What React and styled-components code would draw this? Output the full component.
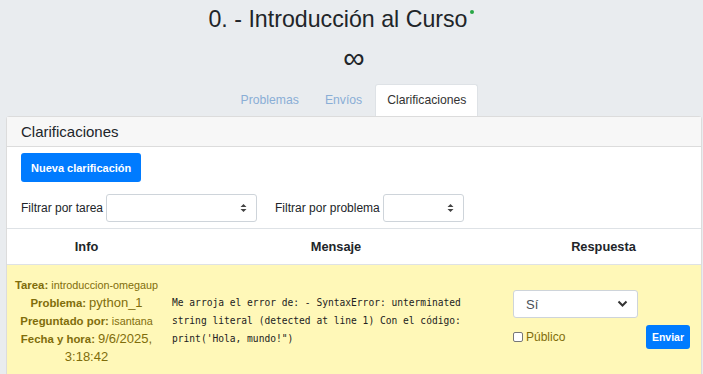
import styled, { createGlobalStyle } from 'styled-components';

const GlobalStyle = createGlobalStyle`
  body {
    margin: 0;
    background: #e9ecef;
    font-family: "Liberation Sans", Arial, sans-serif;
    color: #212529;
  }
`;

const Page = styled.div`
  padding: 0 1px 0 6px;
`;

const Title = styled.h1`
  margin: 0;
  padding: 4px 26px 0 0;
  text-align: center;
  font-size: 23.2px;
  font-weight: 400;
  line-height: 30px;
  height: 36px;
`;

const Dot = styled.span`
  display: inline-block;
  width: 4px;
  height: 4px;
  border-radius: 50%;
  background: #28a745;
  vertical-align: top;
  margin-top: 6px;
  margin-left: 2px;
`;

const Infinity = styled.div`
  text-align: center;
  font-size: 30px;
  line-height: 36px;
  height: 44px;
`;

const Tabs = styled.nav`
  display: flex;
  justify-content: center;
  padding-right: 2px;
  height: 32px;
`;

const Tab = styled.a`
  padding: 0 ${(p) => (p.$active ? '11px' : '12px')};
  font-size: 12.2px;
  line-height: 31px;
  color: ${(p) => (p.$active ? '#333' : '#8aaed6')};
  background: ${(p) => (p.$active ? '#fff' : 'transparent')};
  border: 1px solid ${(p) => (p.$active ? '#dee2e6' : 'transparent')};
  border-bottom: none;
  border-radius: 3px 3px 0 0;
`;

const Card = styled.section`
  background: #fff;
  border: 1px solid #dcdcdc;
  border-radius: 3px 3px 0 0;
`;

const CardHeader = styled.header`
  background: #f7f7f7;
  border-bottom: 1px solid #dcdcdc;
  padding: 0 14px;
  font-size: 15px;
  line-height: 29px;
`;

const Body = styled.div`
  padding: 6px 14px 0;
`;

const Button = styled.button`
  font-family: inherit;
  font-size: ${(p) => p.$fs || '11px'};
  font-weight: 700;
  color: #fff;
  background: #007bff;
  border: none;
  border-radius: 3px;
  padding: 0 ${(p) => p.$px || '10px'};
  height: ${(p) => p.$h || '29px'};
  cursor: pointer;
`;

const Filters = styled.div`
  display: flex;
  align-items: center;
  margin: 12px 0 6px;
  font-size: 12px;
  gap: 18px;
`;

const Filter = styled.label`
  display: flex;
  align-items: center;
  gap: 3px;
`;

const FakeSelect = styled.div`
  width: ${(p) => p.$w};
  height: 28px;
  border: 1px solid #ced4da;
  border-radius: 3px;
  background: #fff;
  box-sizing: border-box;
  display: flex;
  align-items: center;
  justify-content: ${(p) => (p.$text ? 'space-between' : 'flex-end')};
  padding: 0 9px 0 12px;
  font-size: 13px;
  color: #495057;
`;

const Table = styled.div`
  border-top: 1px solid #dee2e6;
`;

const Row = styled.div`
  display: grid;
  grid-template-columns: 159px 340px 1fr;
  background: ${(p) => (p.$warn ? '#fff8b8' : '#fff')};
  border-bottom: ${(p) => (p.$warn ? 'none' : '1px solid #dee2e6')};
`;

const Th = styled.div`
  font-size: 12.8px;
  font-weight: 700;
  text-align: center;
  line-height: 35px;
`;

const InfoCell = styled.div`
  padding: 11px 2px 8px;
  text-align: center;
  color: #7f6d0b;
  font-size: 10.8px;
  line-height: 18px;
`;

const Label = styled.b`
  font-weight: 700;
  font-size: 11.4px;
`;

const Big = styled.span`
  font-size: 13px;
`;

const MsgCell = styled.div`
  padding: 29px 6px 0;
  font-family: "DejaVu Sans Mono", "Liberation Mono", monospace;
  font-size: 9.6px;
  line-height: 18px;
  white-space: pre-wrap;
  color: #222;
`;

const AnswerCell = styled.div`
  padding: 25px 11px 0 7px;
  display: flex;
  flex-direction: column;
`;

const AnswerBottom = styled.div`
  display: flex;
  justify-content: space-between;
  align-items: flex-start;
  margin-top: 7px;
`;

const Check = styled.label`
  display: flex;
  align-items: center;
  gap: 3px;
  font-size: 12px;
  color: #7f6d0b;
  margin-top: 5px;
`;

const Box = styled.span`
  width: 8px;
  height: 8px;
  border: 1px solid #777;
  border-radius: 2px;
  background: #fff;
`;

const Sort = () => (
  <svg width="7" height="10" viewBox="0 0 7 10">
    <path d="M0.5 4L3.5 1L6.5 4Z M0.5 6L3.5 9L6.5 6Z" fill="#444" />
  </svg>
);

const Chevron = () => (
  <svg width="11" height="8" viewBox="0 0 11 8">
    <path d="M1.5 1.5L5.5 5.5L9.5 1.5" stroke="#333" strokeWidth="2" fill="none" />
  </svg>
);

export default function App() {
  return (
    <>
      <GlobalStyle />
      <Page>
        <Title>
          0. - Introducción al Curso<Dot />
        </Title>
        <Infinity>∞</Infinity>
        <Tabs>
          <Tab>Problemas</Tab>
          <Tab>Envíos</Tab>
          <Tab $active>Clarificaciones</Tab>
        </Tabs>
        <Card>
          <CardHeader>Clarificaciones</CardHeader>
          <Body>
            <Button>Nueva clarificación</Button>
            <Filters>
              <Filter>
                Filtrar por tarea
                <FakeSelect $w="151px">
                  <Sort />
                </FakeSelect>
              </Filter>
              <Filter>
                Filtrar por problema
                <FakeSelect $w="81px">
                  <Sort />
                </FakeSelect>
              </Filter>
            </Filters>
          </Body>
          <Table>
            <Row>
              <Th>Info</Th>
              <Th>Mensaje</Th>
              <Th>Respuesta</Th>
            </Row>
            <Row $warn>
              <InfoCell>
                <div>
                  <Label>Tarea:</Label> introduccion-omegaup
                </div>
                <div>
                  <Label>Problema:</Label> <Big>python_1</Big>
                </div>
                <div>
                  <Label>Preguntado por:</Label> isantana
                </div>
                <div>
                  <Label>Fecha y hora:</Label> <Big>9/6/2025,</Big>
                  <br />
                  <Big>3:18:42</Big>
                </div>
              </InfoCell>
              <MsgCell>
                {'Me arroja el error de: - SyntaxError: unterminated\nstring literal (detected at line 1) Con el código:\nprint(\'Hola, mundo!")'}
              </MsgCell>
              <AnswerCell>
                <FakeSelect $w="125px" $text>
                  Sí
                  <Chevron />
                </FakeSelect>
                <AnswerBottom>
                  <Check>
                    <Box />
                    Público
                  </Check>
                  <Button $h="24px" $fs="10.5px" $px="6px">
                    Enviar
                  </Button>
                </AnswerBottom>
              </AnswerCell>
            </Row>
          </Table>
        </Card>
      </Page>
    </>
  );
}
